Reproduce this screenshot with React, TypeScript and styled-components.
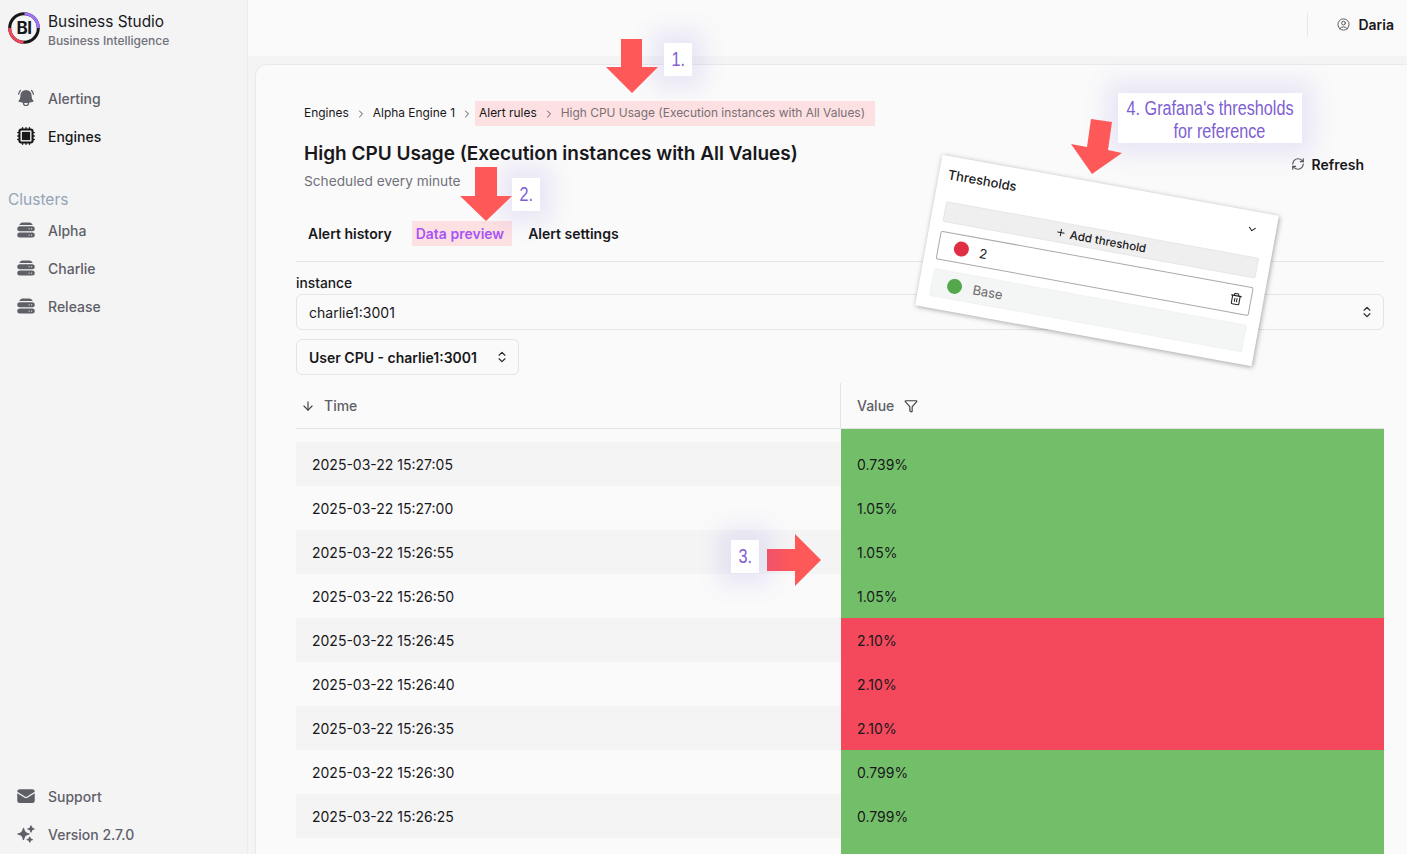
import React from "react";
import styled, { createGlobalStyle } from "styled-components";
import {
  HiBellAlert,
  HiCpuChip,
  HiEnvelope,
  HiServerStack,
  HiSparkles,
  HiOutlineUserCircle,
} from "react-icons/hi2";
import {
  ArrowDown,
  ChevronDown,
  ChevronRight,
  ChevronsUpDown,
  Filter,
  Plus,
  RefreshCw,
  Trash2,
} from "lucide-react";

const GlobalStyle = createGlobalStyle`
  html, body {
    margin: 0;
    padding: 0;
    height: 100%;
    overflow: hidden;
    background: #f4f4f5;
    color: #18181b;
    font-family: Inter, "Liberation Sans", sans-serif;
    font-size: 14px;
  }
  * {
    box-sizing: border-box;
  }
`;

const Page = styled.div`
  position: relative;
  display: flex;
  width: 100%;
  height: 100vh;
  overflow: hidden;
`;

/* sidebar */

const Sidebar = styled.aside`
  display: flex;
  flex-direction: column;
  flex: 0 0 248px;
  padding: 12px 0 1px;
  background: #f4f4f5;
  border-right: 1px solid #ececee;
`;

const Brand = styled.div`
  display: flex;
  align-items: center;
  gap: 8px;
  height: 32px;
  padding-left: 8px;
  margin-bottom: 35px;
`;

const BrandText = styled.div`
  display: flex;
  flex-direction: column;
  gap: 2px;
  margin-top: 5px;
`;

const BrandTitle = styled.div`
  font-size: 15.4px;
  line-height: 18px;
  color: #18181b;
`;

const BrandSub = styled.div`
  font-size: 12px;
  line-height: 15px;
  font-weight: 500;
  color: #71717a;
`;

const NavItem = styled.div<{ $active?: boolean }>`
  display: flex;
  align-items: center;
  gap: 12px;
  height: 38px;
  padding-left: 16px;
  font-weight: 500;
  color: ${(p) => (p.$active ? "#18181b" : "#5f5f68")};

  svg {
    flex: none;
    width: 20px;
    height: 20px;
  }
`;

const ChipIcon = styled(HiCpuChip)`
  && {
    width: 22px;
    height: 22px;
    margin: 0 -1px;
  }
`;

const ClusterHeading = styled.div`
  margin: 33px 0 -1px;
  padding-left: 8px;
  font-size: 15.5px;
  line-height: 24px;
  color: #94a3b8;
`;

const SidebarFooter = styled.div`
  margin-top: auto;
`;

/* main */

const Column = styled.div`
  flex: 1;
  min-width: 0;
  display: flex;
  flex-direction: column;
`;

const TopBar = styled.header`
  display: flex;
  align-items: center;
  justify-content: flex-end;
  flex: 0 0 56px;
  padding: 0 13px 7px 0;
  background: #fafafa;
`;

const TopDivider = styled.div`
  width: 1px;
  height: 24px;
  margin-right: 28px;
  background: #e8e8ea;
`;

const UserName = styled.div`
  display: flex;
  align-items: center;
  gap: 7px;
  font-weight: 600;

  svg {
    width: 15px;
    height: 15px;
    color: #52525b;
  }
`;

const Card = styled.main`
  flex: 1;
  margin: 8px 0 0 7px;
  padding: 36px 23px 0 40px;
  background: #fafafa;
  border: 1px solid #e9e9eb;
  border-width: 1px 0 0 1px;
  border-top-left-radius: 12px;
`;

const Crumbs = styled.nav`
  display: flex;
  align-items: center;
  height: 25px;
  padding-left: 8px;
  font-size: 11.95px;
`;

const CrumbLink = styled.span<{ $muted?: boolean }>`
  margin-bottom: 2px;
  color: ${(p) => (p.$muted ? "#7a6f74" : "#18181b")};
  white-space: nowrap;
`;

const CrumbArrow = styled(ChevronRight)`
  flex: none;
  width: 12px;
  height: 12px;
  margin: 0 6px;
  color: #52525b;
`;

const CrumbHighlight = styled.div`
  display: flex;
  align-items: center;
  height: 25px;
  padding: 0 10px 0 4px;
  margin-left: -4px;
  background: #fde1e2;
`;

const HeadRow = styled.div`
  display: flex;
  justify-content: space-between;
  padding: 14px 20px 0 8px;
`;

const PageTitle = styled.h1`
  margin: 0;
  font-size: 19px;
  line-height: 28px;
  font-weight: 600;
`;

const PageSub = styled.div`
  margin-top: 3px;
  font-size: 13.7px;
  line-height: 20px;
  color: #71717a;
`;

const RefreshButton = styled.div`
  display: flex;
  align-items: center;
  gap: 7px;
  height: 24px;
  margin-top: 12px;
  font-weight: 600;

  svg {
    width: 14px;
    height: 14px;
    color: #52525b;
  }
`;

const Tabs = styled.div`
  display: flex;
  align-items: center;
  margin-top: 30px;
  padding-bottom: 15px;
  border-bottom: 1px solid #e4e4e7;
`;

const Tab = styled.div<{ $active?: boolean }>`
  height: 25px;
  line-height: 25px;
  font-weight: 600;
  color: ${(p) => (p.$active ? "#a855f7" : "#18181b")};
  background: ${(p) => (p.$active ? "#fde1e2" : "transparent")};
  padding: ${(p) => (p.$active ? "0 8px 0 4px" : "0 12px")};
  margin: ${(p) => (p.$active ? "0 4px 0 8px" : "0")};
`;

const FieldLabel = styled.div`
  margin-top: 11px;
  font-size: 13.8px;
  line-height: 20px;
  font-weight: 500;
`;

const SelectBox = styled.div<{ $inline?: boolean }>`
  display: flex;
  align-items: center;
  justify-content: space-between;
  width: ${(p) => (p.$inline ? "223px" : "100%")};
  height: 36px;
  margin-top: ${(p) => (p.$inline ? "9px" : "1px")};
  padding: 0 9px 0 12px;
  background: #fafafa;
  border: 1px solid #e4e4e7;
  border-radius: 6px;
  font-weight: ${(p) => (p.$inline ? 600 : 400)};

  svg {
    width: 14px;
    height: 14px;
    color: #27272a;
  }
`;

const TableHead = styled.div`
  display: grid;
  grid-template-columns: 544px 1fr;
  height: 46px;
  margin-top: 8px;
  border-bottom: 1px solid #e4e4e7;
`;

const HeadCell = styled.div<{ $value?: boolean }>`
  display: flex;
  align-items: center;
  gap: ${(p) => (p.$value ? "10px" : "9px")};
  padding-left: ${(p) => (p.$value ? "16px" : "5px")};
  border-left: ${(p) => (p.$value ? "1px solid #e4e4e7" : "none")};
  color: #5f5f68;
  font-weight: 500;

  svg {
    width: 14px;
    height: 14px;
    color: #3f3f46;
  }
`;

const Row = styled.div<{ $height?: number }>`
  display: grid;
  grid-template-columns: 545px 1fr;
  height: ${(p) => p.$height ?? 44}px;
`;

const TimeCell = styled.div<{ $striped?: boolean }>`
  display: flex;
  align-items: center;
  padding-left: 16px;
  background: ${(p) => (p.$striped ? "#f4f4f5" : "transparent")};
`;

const ValueCell = styled.div<{ $color: string }>`
  display: flex;
  align-items: center;
  padding-left: 16px;
  background: ${(p) => p.$color};
`;

/* annotations laid over the page */

const Arrow = styled.svg<{ $x: number; $y: number }>`
  position: absolute;
  left: ${(p) => p.$x}px;
  top: ${(p) => p.$y}px;
  z-index: 4;
  overflow: visible;
`;

const Note = styled.div<{ $x: number; $y: number; $w: number; $h: number }>`
  position: absolute;
  left: ${(p) => p.$x}px;
  top: ${(p) => p.$y}px;
  width: ${(p) => p.$w}px;
  height: ${(p) => p.$h}px;
  z-index: 3;
  display: flex;
  flex-direction: column;
  align-items: center;
  justify-content: center;
  background: #fff;
  box-shadow: 0 0 22px 12px rgba(112, 92, 214, 0.12);
  color: #7e5ed2;
  font-family: "Liberation Sans", sans-serif;
  font-size: 20px;
  line-height: 23px;
  white-space: nowrap;
`;

const WideNote = styled(Note)`
  padding-top: 4px;
`;

const NoteLine = styled.span<{ $indent?: boolean }>`
  display: inline-block;
  padding-left: ${(p) => (p.$indent ? "24px" : "0")};
  transform: scaleX(0.81);
`;

const Thresholds = styled.div`
  position: absolute;
  left: 926px;
  top: 184px;
  width: 342px;
  height: 153px;
  z-index: 2;
  display: flex;
  flex-direction: column;
  padding: 0 12px 12px;
  background: #fff;
  box-shadow: 1px 1px 5px rgba(0, 0, 0, 0.35);
  transform: rotate(10.3deg);
`;

const ThresholdHead = styled.div`
  display: flex;
  align-items: center;
  justify-content: space-between;
  flex: 0 0 45px;
  padding: 1px 6px 11px 0;
  margin-left: -3px;
  font-weight: 500;
  font-size: 13px;

  svg {
    width: 12px;
    height: 12px;
  }
`;

const AddThreshold = styled.div`
  display: flex;
  align-items: center;
  justify-content: center;
  gap: 4px;
  flex: 0 0 21px;
  background: #efefef;
  border: 1px solid #e6e6e6;
  border-radius: 2px;
  font-size: 11.5px;
  font-weight: 500;

  svg {
    width: 11px;
    height: 11px;
  }
`;

const ThresholdRow = styled.div<{ $base?: boolean }>`
  display: flex;
  align-items: center;
  flex: 0 0 ${(p) => (p.$base ? "28px" : "29px")};
  margin-top: 9px;
  padding: 0 8px 0 15px;
  gap: 11px;
  background: ${(p) => (p.$base ? "#f4f5f5" : "#fff")};
  border: 1px solid ${(p) => (p.$base ? "#f0f1f1" : "#a9a9b0")};
  border-radius: 2px;
  font-size: 13px;
  color: ${(p) => (p.$base ? "#6b6b6b" : "#18181b")};
`;

const Dot = styled.span<{ $color: string }>`
  flex: none;
  width: 15px;
  height: 15px;
  border-radius: 50%;
  background: ${(p) => p.$color};
`;

const RowTrash = styled(Trash2)`
  width: 13px;
  height: 13px;
  margin-left: auto;
  color: #27272a;
`;

const GREEN = "#73bf69";
const RED = "#f4495c";

const rows = [
  { time: "2025-03-22 15:27:05", value: "0.739%", color: GREEN },
  { time: "2025-03-22 15:27:00", value: "1.05%", color: GREEN },
  { time: "2025-03-22 15:26:55", value: "1.05%", color: GREEN },
  { time: "2025-03-22 15:26:50", value: "1.05%", color: GREEN },
  { time: "2025-03-22 15:26:45", value: "2.10%", color: RED },
  { time: "2025-03-22 15:26:40", value: "2.10%", color: RED },
  { time: "2025-03-22 15:26:35", value: "2.10%", color: RED },
  { time: "2025-03-22 15:26:30", value: "0.799%", color: GREEN },
  { time: "2025-03-22 15:26:25", value: "0.799%", color: GREEN },
];

const Logo = () => (
  <svg width="32" height="32" viewBox="0 0 32 32" fill="none">
    <circle cx="16" cy="16" r="14.3" stroke="#18181b" strokeWidth="3" />
    <path d="M16.5 1.7A14.3 14.3 0 0 1 30.3 16" stroke="#a274f5" strokeWidth="3" />
    <path d="M1.7 16A14.3 14.3 0 0 0 15.5 30.3" stroke="#f0465a" strokeWidth="3" />
    <text
      x="16"
      y="22"
      textAnchor="middle"
      fontFamily="Inter, sans-serif"
      fontWeight="700"
      fontSize="17"
      letterSpacing="-0.5"
      fill="#18181b"
    >
      BI
    </text>
  </svg>
);

const ArrowGradient = ({ id }: { id: string }) => (
  <defs>
    <linearGradient id={id} x1="0" y1="0" x2="1" y2="0">
      <stop offset="0" stopColor="#f0526a" />
      <stop offset="0.5" stopColor="#ff5858" />
    </linearGradient>
  </defs>
);

export default function App() {
  return (
    <Page>
      <GlobalStyle />
      <Sidebar>
        <Brand>
          <Logo />
          <BrandText>
            <BrandTitle>Business Studio</BrandTitle>
            <BrandSub>Business Intelligence</BrandSub>
          </BrandText>
        </Brand>
        <NavItem>
          <HiBellAlert />
          Alerting
        </NavItem>
        <NavItem $active>
          <ChipIcon />
          Engines
        </NavItem>
        <ClusterHeading>Clusters</ClusterHeading>
        <NavItem>
          <HiServerStack />
          Alpha
        </NavItem>
        <NavItem>
          <HiServerStack />
          Charlie
        </NavItem>
        <NavItem>
          <HiServerStack />
          Release
        </NavItem>
        <SidebarFooter>
          <NavItem>
            <HiEnvelope />
            Support
          </NavItem>
          <NavItem>
            <HiSparkles />
            Version 2.7.0
          </NavItem>
        </SidebarFooter>
      </Sidebar>

      <Column>
        <TopBar>
          <TopDivider />
          <UserName>
            <HiOutlineUserCircle />
            Daria
          </UserName>
        </TopBar>
        <Card>
          <Crumbs>
            <CrumbLink>Engines</CrumbLink>
            <CrumbArrow />
            <CrumbLink>Alpha Engine 1</CrumbLink>
            <CrumbArrow />
            <CrumbHighlight>
              <CrumbLink>Alert rules</CrumbLink>
              <CrumbArrow />
              <CrumbLink $muted>High CPU Usage (Execution instances with All Values)</CrumbLink>
            </CrumbHighlight>
          </Crumbs>
          <HeadRow>
            <div>
              <PageTitle>High CPU Usage (Execution instances with All Values)</PageTitle>
              <PageSub>Scheduled every minute</PageSub>
            </div>
            <RefreshButton>
              <RefreshCw />
              Refresh
            </RefreshButton>
          </HeadRow>
          <Tabs>
            <Tab>Alert history</Tab>
            <Tab $active>Data preview</Tab>
            <Tab>Alert settings</Tab>
          </Tabs>
          <FieldLabel>instance</FieldLabel>
          <SelectBox>
            charlie1:3001
            <ChevronsUpDown />
          </SelectBox>
          <SelectBox $inline>
            User CPU - charlie1:3001
            <ChevronsUpDown />
          </SelectBox>
          <TableHead>
            <HeadCell>
              <ArrowDown />
              Time
            </HeadCell>
            <HeadCell $value>
              Value
              <Filter />
            </HeadCell>
          </TableHead>
          <Row $height={13}>
            <TimeCell />
            <ValueCell $color={GREEN} />
          </Row>
          {rows.map((row, i) => (
            <Row key={row.time}>
              <TimeCell $striped={i % 2 === 0}>{row.time}</TimeCell>
              <ValueCell $color={row.color}>{row.value}</ValueCell>
            </Row>
          ))}
          <Row $height={16}>
            <TimeCell />
            <ValueCell $color={GREEN} />
          </Row>
        </Card>
      </Column>

      <Thresholds>
        <ThresholdHead>
          Thresholds
          <ChevronDown />
        </ThresholdHead>
        <AddThreshold>
          <Plus />
          Add threshold
        </AddThreshold>
        <ThresholdRow>
          <Dot $color="#e02f44" />
          2
          <RowTrash />
        </ThresholdRow>
        <ThresholdRow $base>
          <Dot $color="#52a84a" />
          Base
        </ThresholdRow>
      </Thresholds>

      <Note $x={664} $y={43} $w={28} $h={33}>
        <NoteLine>1.</NoteLine>
      </Note>
      <Note $x={512} $y={178} $w={28} $h={33}>
        <NoteLine>2.</NoteLine>
      </Note>
      <Note $x={731} $y={540} $w={28} $h={33}>
        <NoteLine>3.</NoteLine>
      </Note>
      <WideNote $x={1118} $y={93} $w={184} $h={50}>
        <NoteLine>4. Grafana's thresholds</NoteLine>
        <NoteLine $indent>for reference</NoteLine>
      </WideNote>

      <Arrow $x={606} $y={39} width="52" height="54" viewBox="0 0 52 54">
        <polygon points="15,0 36,0 36,28 52,28 26,54 0,28 15,28" fill="#ff5858" />
      </Arrow>
      <Arrow $x={460} $y={167} width="52" height="54" viewBox="0 0 52 54">
        <polygon points="15,0 37,0 37,29 52,29 26,54 0,29 15,29" fill="#ff5858" />
      </Arrow>
      <Arrow $x={767} $y={534} width="54" height="52" viewBox="0 0 54 52">
        <ArrowGradient id="arrowThree" />
        <polygon points="0,15 28,15 28,0 54,26 28,52 28,37 0,37" fill="url(#arrowThree)" />
      </Arrow>
      <Arrow $x={1071} $y={119} width="51" height="55" viewBox="0 0 51 55">
        <polygon points="20,0 41,3 37,31 51,34 21,55 0,25 16,28" fill="#ff5858" />
      </Arrow>
    </Page>
  );
}
